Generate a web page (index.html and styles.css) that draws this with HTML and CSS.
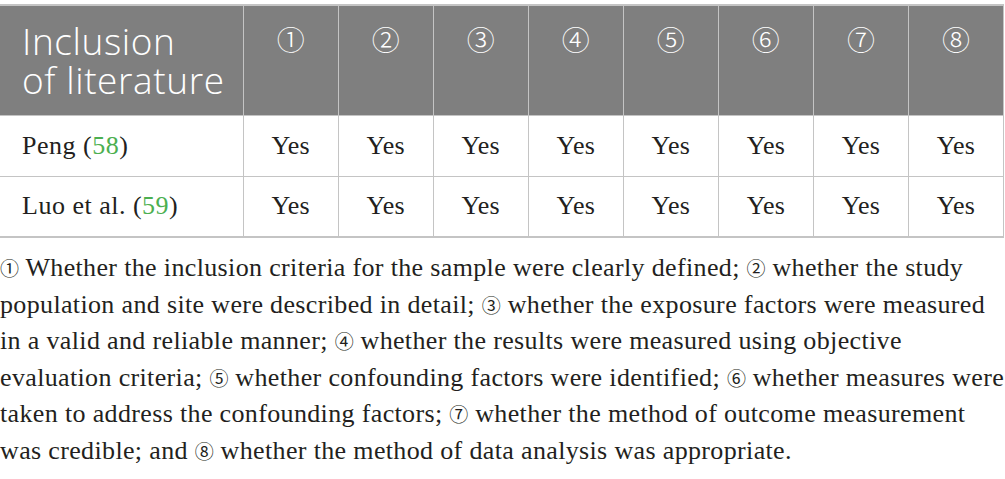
FILE: index.html
```html
<!DOCTYPE html>
<html>
<head>
<meta charset="utf-8">
<link rel="stylesheet" href="styles.css">
</head>
<body>
<div class="wrap">
<table class="qtable">
<colgroup>
<col class="c-first">
<col class="c-n"><col class="c-n"><col class="c-n"><col class="c-n">
<col class="c-n"><col class="c-n"><col class="c-n"><col class="c-n">
</colgroup>
<thead>
<tr class="hrow">
<th class="h-lit">Inclusion<br>of literature</th>
<th class="h-num">①</th><th class="h-num">②</th><th class="h-num">③</th><th class="h-num">④</th>
<th class="h-num">⑤</th><th class="h-num">⑥</th><th class="h-num">⑦</th><th class="h-num">⑧</th>
</tr>
</thead>
<tbody>
<tr class="brow">
<td class="d-name">Peng (<span class="ref">58</span>)</td>
<td>Yes</td><td>Yes</td><td>Yes</td><td>Yes</td><td>Yes</td><td>Yes</td><td>Yes</td><td>Yes</td>
</tr>
<tr class="brow">
<td class="d-name">Luo et al. (<span class="ref">59</span>)</td>
<td>Yes</td><td>Yes</td><td>Yes</td><td>Yes</td><td>Yes</td><td>Yes</td><td>Yes</td><td>Yes</td>
</tr>
</tbody>
</table>
<p class="note"><span class="cn">①</span> Whether the inclusion criteria for the sample were clearly defined; <span class="cn">②</span> whether the study<br>population and site were described in detail; <span class="cn">③</span> whether the exposure factors were measured<br>in a valid and reliable manner; <span class="cn">④</span> whether the results were measured using objective<br>evaluation criteria; <span class="cn">⑤</span> whether confounding factors were identified; <span class="cn">⑥</span> whether measures were<br>taken to address the confounding factors; <span class="cn">⑦</span> whether the method of outcome measurement<br>was credible; and <span class="cn">⑧</span> whether the method of data analysis was appropriate.</p>
</div>
</body>
</html>
```

FILE: styles.css
```css
html, body {
  margin: 0;
  padding: 0;
  background: #ffffff;
}
.wrap {
  padding-top: 4px;
  width: 1005px;
}
.qtable {
  border-collapse: collapse;
  width: 1004px;
  table-layout: fixed;
  color: #231f20;
}
.c-first { width: 243px; }
.c-n { width: 95px; }
.qtable th, .qtable td {
  border: 1px solid #c4c4c4;
}
.qtable tr:first-child th {
  border-top: 2px solid #c4c4c4;
}
.qtable tbody tr:last-child td {
  border-bottom: 2px solid #c4c4c4;
}
.qtable th:first-child, .qtable td:first-child {
  border-left: none;
}
.hrow { height: 110px; }
.qtable thead th {
  background: #7f7f7f;
  color: #ffffff;
  font-weight: normal;
  vertical-align: top;
  padding: 0;
}
.qtable thead th.h-lit {
  text-align: left;
  font-family: "Open Sans", sans-serif;
  font-weight: 300;
  font-size: 37px;
  letter-spacing: 0.6px;
  line-height: 39px;
  padding: 15px 0 0 22px;
}
.qtable thead th.h-num {
  text-align: center;
  font-family: "Noto Sans CJK JP", "DejaVu Sans", sans-serif;
  font-weight: 300;
  font-size: 28px;
  line-height: 30px;
  padding-top: 18px;
}
.brow { height: 61px; }
.qtable tbody td {
  padding: 0;
  text-align: center;
  vertical-align: middle;
  font-family: "Liberation Serif", serif;
  font-size: 26px;
  letter-spacing: 0.2px;
}
.qtable tbody td.d-name {
  text-align: left;
  padding-left: 22px;
  letter-spacing: 0.5px;
}
.ref { color: #4caf50; }
.note {
  margin: 12px 0 0 0;
  font-family: "Liberation Serif", serif;
  font-size: 26px;
  letter-spacing: 0.35px;
  line-height: 36.5px;
  color: #231f20;
  white-space: nowrap;
}
.cn {
  font-family: "Noto Sans CJK JP", "DejaVu Sans", sans-serif;
  font-size: 19px;
  letter-spacing: 0;
}
```
